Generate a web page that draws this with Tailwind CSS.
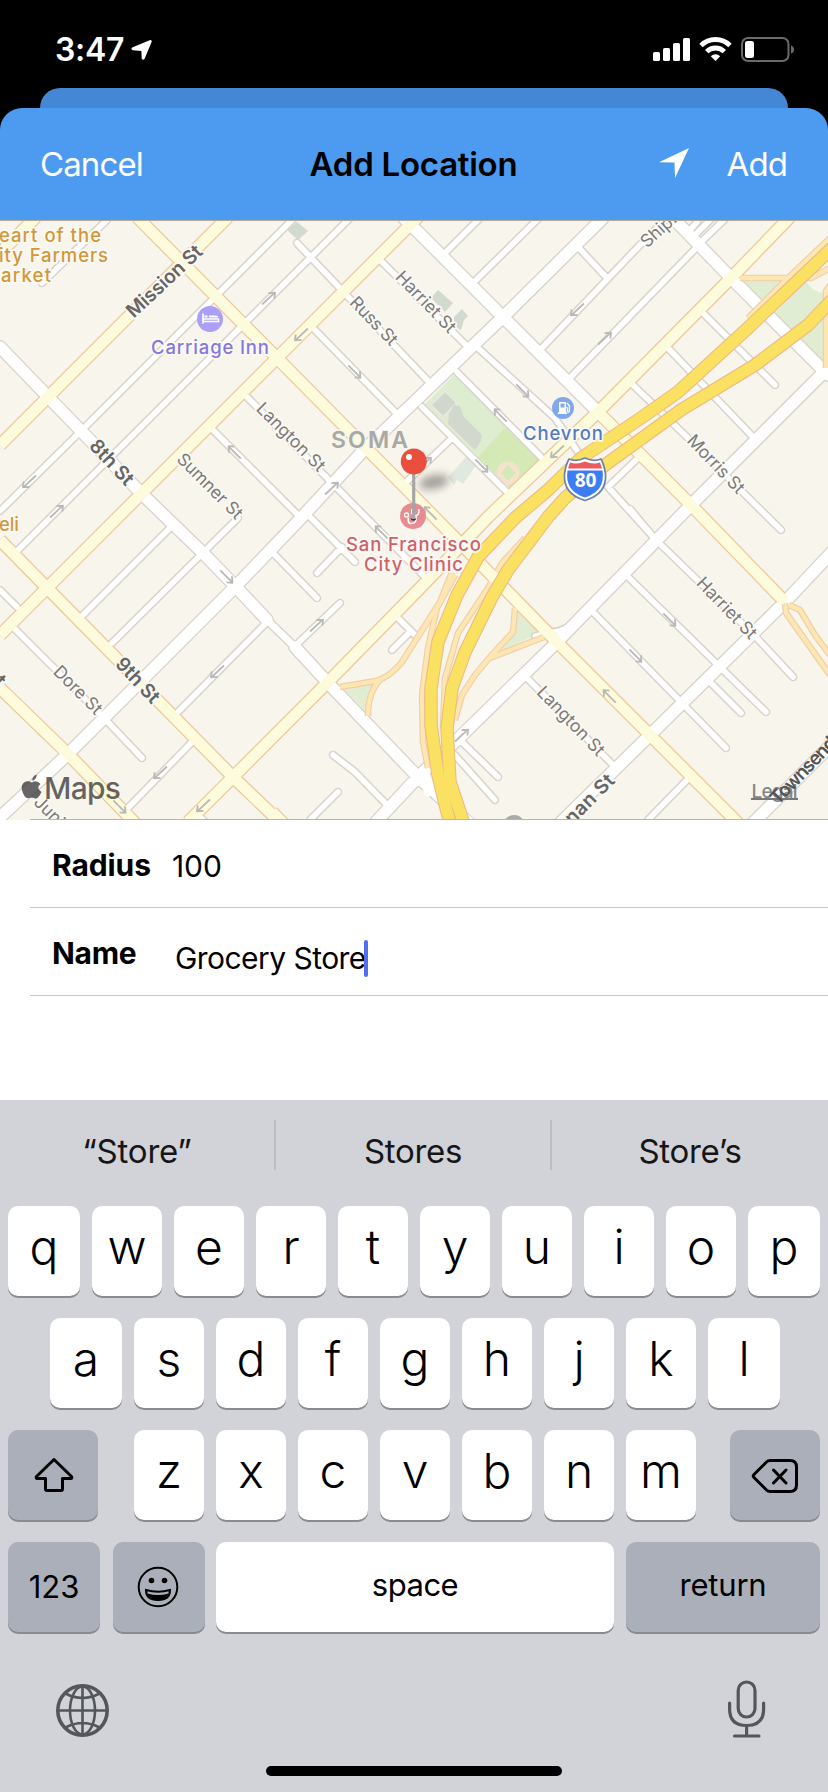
<!DOCTYPE html>
<html lang="en">
<head>
  <meta charset="UTF-8" />
  <meta name="viewport" content="width=device-width, initial-scale=1.0"/>
  <title>Add Location</title>
  <script src="https://cdn.jsdelivr.net/npm/@tailwindcss/browser@4"></script>
</head>
<body class="w-[828px] h-[1792px] overflow-hidden bg-black font-['Inter','Liberation_Sans',sans-serif] text-black">
<div class="flex flex-col w-[828px] h-[1792px]">

  <!-- status bar -->
  <header class="flex items-start justify-between h-[88px] pl-[55px] pr-[33px] text-white">
    <div class="flex items-start pt-[30px]">
      <span class="w-[76px] text-[32px] leading-[40px] font-semibold tracking-[-0.3px]">3:47</span>
      <svg class="mt-[10px] w-[21px] h-[20px]" viewBox="0 0 21 20"><path d="M1.200 7.500 18.600.200Q21-.4 20.600 2L13.600 18.800Q12.300 20.800 10.700 18.800L10.400 11 1.700 10.300Q-.7 9 1.200 7.500Z" fill="#fff"/></svg>
    </div>
    <div class="flex items-start gap-[9px] pt-[37px]">
      <svg class="w-[37px] h-[25px]" viewBox="0 0 37 25" fill="#fff"><rect x="0" y="15" width="7" height="9" rx="1.600"/><rect x="10" y="11" width="7" height="13" rx="1.600"/><rect x="20" y="6" width="7" height="18" rx="1.600"/><rect x="30" y="1" width="7" height="23" rx="1.600"/></svg>
      <svg class="w-[33px] h-[25px]" viewBox="0 0 33 25" fill="none" stroke="#fff" stroke-width="4.800"><path d="M2 8.500a20.500 20.500 0 0 1 29 0"/><path d="M7.700 14.600a12.500 12.500 0 0 1 17.600 0"/><path d="M16.500 24 11.800 19.200a6.700 6.700 0 0 1 9.400 0Z" fill="#fff" stroke="none"/></svg>
      <svg class="w-[54px] h-[25px]" viewBox="0 0 54 25"><rect x="1" y="1" width="46.500" height="23" rx="6" fill="none" stroke="#6b6b6b" stroke-width="2"/><rect x="4" y="4" width="9" height="17" rx="2.500" fill="#fff"/><path d="M50 8.500v8q3-1 3-4t-3-4Z" fill="#6b6b6b"/></svg>
    </div>
  </header>

  <!-- presenting sheet behind -->
  <div class="mx-[40px] h-[20px] shrink-0 bg-[#4487d5] rounded-t-[20px]"></div>

  <!-- nav bar -->
  <nav class="grid grid-cols-[1fr_auto_1fr] items-center h-[112px] shrink-0 pl-[40px] pr-[41px] pb-[1px] bg-[#4d9af1] rounded-t-[22px] text-[33px] leading-[40px]">
    <button class="justify-self-start text-white tracking-[-0.9px]">Cancel</button>
    <h1 class="font-semibold tracking-[-0.25px]">Add Location</h1>
    <div class="flex items-center justify-self-end text-white">
      <svg class="w-[30px] h-[30px] mr-[38px] -mt-[2px]" viewBox="0 0 30 30"><path d="M30 0 0 14.300 15.500 14.500 16 30Z" fill="#fff"/></svg>
      <button class="tracking-[-0.9px]">Add</button>
    </div>
  </nav>

  <!-- map -->
  <section class="h-[600px] shrink-0">
    <svg class="block w-[828px] h-[600px] bg-[#f8f5ec]" viewBox="0 220 828 600" fill="none" stroke-linejoin="round">
      <defs>
        <path id="alley" d="M107 220 42 283M295 217 82 430 0 511M351 217 240 328 18 550M247 397 425 577M213 430 300 517M311 518 355 562M342 547 317 573M0 590 17 607M15 629 105 719 142 758M170 528 83 615M238 518 112 643M267 622 178 712M192 742 126 810M198 815 206 823M273 553 317 598M295 646 340 603M398 618 415 635M410 632 392 650M333 755 355 772 389 807M338 792 310 820M462 742 498 777M453 753 495 800M527 678 615 767M630 509 656 540 755 636 793 677M626 575 766 712M591 610 726 748M708 680 741 713M686 781 648 820M578 247 606 277M540 350 638 247 668 217M568 380 698 246M697 222 690 230M693 237 713 217M700 243 727 217M703 313 775 385M668 348 753 437M633 385 688 438 781 530M636 460 608 487 656 540M478 348 555 418 582 458M457 372 542 458M422 407 508 493M452 438 402 486M315 330 398 415M297 243 430 383M382 262 470 349M445 253 480 218M473 283 539 218"/>
        <path id="street" d="M0 347 143 495 203 553 235 586 267 620M295 647 328 683 418 777 472 826M603 218 503 317 363 451 302 517 235 587 67 755 -3 820M404 218 503 317 598 412M376 822 418 777 460 737 552 647 691 505 828 368M832 552 785 602 648 737 555 828M752 824 832 744M673 218 731 278 828 375"/>
        <path id="avenue" d="M0 445 228 217M0 253 36 217M137 217 277 358 462 545 552 637 740 825M0 635 48 587 115 520 278 357 420 215M790 217 731 278 598 412 488 517 425 583 328 682 233 777 188 822M0 540 233 777 280 822M0 688 67 753 136 824M598 412 691 505 785 602M272 812 285 825"/>
        <path id="ramp" d="M452 572 440 602 402 662Q390 677 376 681L340 687M380 680Q368 692 368 716M455 575 437 608 428 648 422 695 423 742 428 768M525 538 502 563 488 588 458 633 445 678 443 728M515 608 513 632 490 657 475 675 462 695 455 720M490 658 544 637M740 278H811L830 268M830 238 788 278 748 318M826 368V291L831 284M785 603 786 613 830 675M789 605 800 610 815 635 830 655"/>
        <path id="freeway" d="M832 248 788 290 748 328 678 392 641 418 581 458 548 490 515 518 478 557 457 595 438 642 431 688V725L438 775 450 824M832 300 808 325 755 365 681 410 605 465 565 498 548 517 508 570 492 597 465 652 452 688 447 728 450 782 464 824"/>
        <path id="arrow" d="M-9.500 0H7.500M3-4 8 .300 3.500 4"/>
      </defs>

      <!-- parks and buildings -->
      <path fill="#deecd0" d="M455 374 542 462 512 490 425 404Z"/>
      <path fill="#d4e9b5" d="M505 428 542 462 512 490 478 457Z"/>
      <path fill="#d2d7cd" stroke="#e4e8de" stroke-width="2" d="M445 391 457 403 443 417 431 405Z"/>
      <path fill="#d2d8cd" d="M454 405 460 406 464 417 482 435 481 441 475 450 448 424 449 414Z"/>
      <circle cx="508" cy="473" r="11.500" fill="#f5e2cd"/>
      <path fill="#d4e9b5" d="M508 465 516 473 508 481 501 473Z"/>
      <path fill="#d2dad0" d="M438 290 453 303 445 312 431 298ZM462 309 468 316 464 320 461 330 454 326 454 317ZM297 222 308 231 298 240 287 230Z"/>
      <path fill="#e1e8e0" d="M467 456 478 463 463 484 457 480 454 485 448 477Z"/>
      <path fill="#e1edd2" d="M743 280H783L761 303ZM773 315 806 280Q811 292 824 293V364ZM517 611 540 633 500 652 514 633ZM343 688 376 683Q366 695 366 712Z"/>

      <!-- casings -->
      <g stroke="#d8d3cb" stroke-linecap="round">
        <use href="#alley" stroke-width="8.600"/>
        <use href="#street" stroke-width="14"/>
        <path d="M267 620 297 649" stroke-width="9.500"/>
        <path d="M535 636 552 632Q564 631 574 622" stroke-width="8"/>
      </g>
      <use href="#avenue" stroke="#f1c79b" stroke-width="13.500"/>
      <!-- fills -->
      <g stroke="#fff" stroke-linecap="round">
        <use href="#alley" stroke-width="5.600"/>
        <use href="#street" stroke-width="11.400"/>
        <path d="M267 620 297 649" stroke-width="7"/>
        <path d="M535 636 552 632Q564 631 574 622" stroke-width="5"/>
        <path d="M422 775 440 795 470 822M425 772 428 792" stroke-width="9"/>
      </g>
      <use href="#ramp" stroke="#f2cda6" stroke-width="6.500"/>
      <use href="#ramp" stroke="#fce6b2" stroke-width="4.300"/>
      <use href="#avenue" stroke="#fcfbdb" stroke-width="11"/>
      <use href="#freeway" stroke="#ecb988" stroke-width="13.500"/>
      <use href="#freeway" stroke="#fae161" stroke-width="11.400"/>

      <!-- one way arrows -->
      <g stroke="#b9b9b7" stroke-width="1.800">
        <use href="#arrow" transform="translate(269 298) rotate(-43)"/>
        <use href="#arrow" transform="translate(57 511) rotate(-43)"/>
        <use href="#arrow" transform="translate(332 488) rotate(-43)"/>
        <use href="#arrow" transform="translate(605 338) rotate(-43)"/>
        <use href="#arrow" transform="translate(317 625) rotate(-43)"/>
        <use href="#arrow" transform="translate(462 735) rotate(-43)"/>
        <use href="#arrow" transform="translate(425 463) rotate(-43)"/>
        <use href="#arrow" transform="translate(29 482) rotate(137)"/>
        <use href="#arrow" transform="translate(301 335) rotate(137)"/>
        <use href="#arrow" transform="translate(577 310) rotate(137)"/>
        <use href="#arrow" transform="translate(217 672) rotate(137)"/>
        <use href="#arrow" transform="translate(160 773) rotate(137)"/>
        <use href="#arrow" transform="translate(203 806) rotate(137)"/>
        <use href="#arrow" transform="translate(557 452) rotate(137)"/>
        <use href="#arrow" transform="translate(355 372) rotate(45)"/>
        <use href="#arrow" transform="translate(523 391) rotate(45)"/>
        <use href="#arrow" transform="translate(482 466) rotate(45)"/>
        <use href="#arrow" transform="translate(227 577) rotate(45)"/>
        <use href="#arrow" transform="translate(120 807) rotate(45)"/>
        <use href="#arrow" transform="translate(670 620) rotate(45)"/>
        <use href="#arrow" transform="translate(636 656) rotate(45)"/>
        <use href="#arrow" transform="translate(234 452) rotate(-135)"/>
        <use href="#arrow" transform="translate(500 415) rotate(-135)"/>
        <use href="#arrow" transform="translate(381 532) rotate(-135)"/>
        <use href="#arrow" transform="translate(609 696) rotate(-135)"/>
        <use href="#arrow" transform="translate(430 513) rotate(-135)"/>
      </g>

      <!-- street names -->
      <g font-size="17.500" fill="#7b7b7b" stroke="#fbf9f4" stroke-width="3.500" paint-order="stroke" text-anchor="middle">
        <text transform="translate(210 486) rotate(45)" y="6" textLength="85">Sumner St</text>
        <text transform="translate(291 437) rotate(45)" y="6" textLength="89">Langton St</text>
        <text transform="translate(374 321) rotate(46)" y="6" textLength="60">Russ St</text>
        <text transform="translate(426 302) rotate(46)" y="6" textLength="78">Harriet St</text>
        <text transform="translate(716 464) rotate(46)" y="6" textLength="74">Morris St</text>
        <text transform="translate(727 608) rotate(46)" y="6" textLength="78">Harriet St</text>
        <text transform="translate(571 721) rotate(46)" y="6" textLength="89">Langton St</text>
        <text transform="translate(78 690) rotate(45)" y="6" textLength="61">Dore St</text>
        <text transform="translate(643 244) rotate(-42)" y="6" text-anchor="start">Ship.</text>
        <text transform="translate(37 799) rotate(45)" y="6" text-anchor="start">Junip</text>
      </g>
      <g font-size="19.500" font-weight="600" fill="#666" stroke="#fbf9f4" stroke-width="3.500" paint-order="stroke" text-anchor="middle">
        <text transform="translate(164 281) rotate(-43)" y="7" textLength="96">Mission St</text>
        <text transform="translate(112 462) rotate(47)" y="7" textLength="55">8th St</text>
        <text transform="translate(138 680) rotate(47)" y="7" textLength="55">9th St</text>
        <text transform="translate(3 683) rotate(46)" y="7" text-anchor="end">t</text>
        <text transform="translate(611 777) rotate(-45)" y="7" text-anchor="end" textLength="74">nnan St</text>
      </g>

      <!-- places -->
      <g font-size="18.500" font-weight="500" stroke="#fbf9f4" stroke-width="3.500" paint-order="stroke">
        <g fill="#d2973a">
          <text x="-1" y="242" textLength="102">eart of the</text>
          <text x="-1" y="262" textLength="109">ity Farmers</text>
          <text x="1" y="282" textLength="50">arket</text>
          <text x="-1" y="531" textLength="20">eli</text>
        </g>
        <text x="151" y="353.500" fill="#8478e0" textLength="118">Carriage Inn</text>
        <text x="523" y="439.500" fill="#557abf" textLength="80">Chevron</text>
        <text x="346" y="551" fill="#cf6268" textLength="135">San Francisco</text>
        <text x="364" y="571" fill="#cf6268" textLength="99">City Clinic</text>
      </g>
      <text x="331" y="448" font-size="23" font-weight="600" fill="#a8a8a5" stroke="#f8f5ec" stroke-width="3" paint-order="stroke" textLength="77">SOMA</text>

      <circle cx="210" cy="319" r="13" fill="#aaa0f7"/>
      <path d="M203 313.500V323.500M218.500 322.500V319H203M203 321.500H218.500" stroke="#fff" stroke-width="1.700"/>
      <path d="M204.500 315.500h3v2h-3ZM209 315.500h7q2 0 2.500 2H209Z" fill="#fff"/>

      <circle cx="563" cy="408" r="11" fill="#82a8ec"/>
      <path fill="#fff" fill-rule="evenodd" d="M559 402h7v10.500h1.200v1.500h-9.400v-1.500H559ZM560.500 403.500v4h4v-4Z"/>
      <path d="M566 407.500h1.300v4q1.200 1.500 2-.2V405.500l-2.500-2.500" stroke="#fff" stroke-width="1.200"/>

      <!-- interstate shield -->
      <path d="M569 459Q576 462 585 458 594 462 601 459 604 464 605.500 474 607 494 585 500.500 563 494 564.500 474 566 464 569 459Z" fill="#fff" stroke="#6c81ac" stroke-width="1.700"/>
      <path d="M570 462.500Q577 465 585 461.500 593 465 600 462.500L602 468.500H568Z" fill="#ea5a5e"/>
      <path d="M567.500 470.500H602.500Q605.500 491 585 497.500 564.500 491 567.500 470.500Z" fill="#3c7df5"/>
      <text x="585.500" y="486.500" font-family="Open Sans" font-size="19" font-weight="700" fill="#fff" text-anchor="middle">80</text>

      <!-- clinic marker and pin -->
      <circle cx="413" cy="516" r="13" fill="#e78c91"/>
      <path d="M412 509q-1.500 6 3 6.500t4-6.500M416 516q1 7-4 7.500t-3.500-6" stroke="#fff" stroke-width="1.600"/>
      <circle cx="406.500" cy="515" r="2" stroke="#fff" stroke-width="1.300"/>
      <ellipse cx="434" cy="482" rx="15" ry="7" transform="rotate(-12 434 482)" fill="#000" class="opacity-35 blur-[4px]"/>
      <path d="M410.500 518.500h6l-1.500 2h-3Z" fill="#333"/>
      <path d="M413.700 472V519" stroke="#a5a5a5" stroke-width="3.200"/>
      <circle cx="413.800" cy="461.500" r="13" fill="#ea4e3e"/>
      <circle cx="409" cy="457" r="3" fill="#fff"/>

      <!-- attribution -->
      <path fill="#333" class="opacity-75" d="M36.500 774.500Q37 778.500 32.500 781 31.500 777 36.500 774.500ZM32 782.500Q36.500 779.500 40.500 784 35.500 787.500 41.500 792 37.500 800.500 34 798 31.500 796.800 29 798 25.500 799.500 22.500 792 20 784.500 25 781.700 28 780.500 32 782.500Z"/>
      <text x="44" y="799" font-size="30" font-weight="500" fill="#333" fill-opacity=".75" textLength="77">Maps</text>
      <text x="751.500" y="798" font-size="19" font-weight="500" fill="#777" fill-opacity=".9" textLength="46">Legal</text>
      <path d="M751 799H798" stroke="#777" stroke-width="2"/>
      <text transform="translate(773 801) rotate(-46)" y="7" font-size="19" font-weight="600" fill="#555" textLength="86">Townsend</text>
      <circle cx="514" cy="826" r="11" fill="#aaa"/>
      <path d="M30 819.500H828" stroke="#b5b5b5"/>
      <path d="M0 220.500H828" stroke="#b5a99c"/>
    </svg>
  </section>

  <!-- form -->
  <main class="h-[280px] shrink-0 bg-white pl-[30px] text-[30px] leading-[36px]">
    <div class="flex items-start h-[88px] pl-[22px] pt-[27px] border-b border-[#c8c8ca]">
      <label class="w-[120px] font-bold tracking-[-0.1px]">Radius</label>
      <span class="pt-[1px] tracking-[-0.1px]">100</span>
    </div>
    <div class="flex items-start h-[88px] pl-[22px] pt-[27px] border-b border-[#c8c8ca]">
      <label class="w-[123px] font-bold tracking-[-0.3px]">Name</label>
      <span class="pt-[5px] w-[189px] whitespace-nowrap tracking-[-0.55px]">Grocery Store</span>
      <span class="mt-[5px] w-[4px] h-[37px] rounded-sm bg-[#4f6fee]"></span>
    </div>
  </main>

  <!-- keyboard -->
  <footer class="flex flex-col flex-1 bg-[#d2d3d9]">
    <div class="grid grid-cols-3 h-[106px] pt-[20px] text-[33px] leading-[40px] text-center text-[#161616]">
      <div class="h-[50px] pt-[11px] tracking-[-0.2px] border-r-2 border-[#bcbdc2]">“Store”</div>
      <div class="h-[50px] pt-[11px] tracking-[-0.3px] border-r-2 border-[#bcbdc2]">Stores</div>
      <div class="h-[50px] pt-[11px] tracking-[-0.3px]">Store’s</div>
    </div>
    <div class="flex flex-col gap-[22px] px-[8px]">
      <div id="row1" class="flex gap-[12px]"></div>
      <div id="row2" class="flex gap-[12px] pl-[42px] pr-[40px]"></div>
      <div class="flex justify-between">
        <div class="flex items-center justify-center w-[90px] h-[90px] rounded-[10px] bg-[#abafba] shadow-[0_2px_0_#898a8f]">
          <svg class="w-[42px] h-[38px] ml-[2px]" viewBox="0 0 42 38" fill="none" stroke="#000" stroke-width="3" stroke-linejoin="round"><path d="M21 3.500 3.500 20.500Q2.500 22.500 4.500 22.500H12.500V33Q12.500 34.500 14 34.500H28Q29.500 34.500 29.500 33V22.500H37.500Q39.500 22.500 38.500 20.500Z"/></svg>
        </div>
        <div id="row3" class="flex gap-[12px] pl-[2px]"></div>
        <div class="flex items-center justify-center w-[90px] h-[90px] rounded-[10px] bg-[#abafba] shadow-[0_2px_0_#898a8f]">
          <svg class="w-[48px] h-[38px] mt-[2px]" viewBox="0 0 48 38" fill="none" stroke="#000" stroke-width="3" stroke-linejoin="round" stroke-linecap="round"><path d="M19 3.500H39Q45.500 3.500 45.500 10V28Q45.500 34.500 39 34.500H19Q17 34.500 15.500 33L3 20.500Q1.500 19 3 17.500L15.500 5Q17 3.500 19 3.500ZM22.500 13 35 26M35 13 22.500 26"/></svg>
        </div>
      </div>
      <div class="flex h-[90px] text-[31px] text-center leading-[85px]">
        <div class="w-[92px] mr-[13px] rounded-[10px] bg-[#abafba] shadow-[0_2px_0_#898a8f] leading-[90px] tracking-[-0.1px]">123</div>
        <div class="flex items-center justify-center w-[92px] mr-[11px] rounded-[10px] bg-[#abafba] shadow-[0_2px_0_#898a8f]">
          <svg class="w-[42px] h-[42px] mr-[3px]" viewBox="0 0 42 42" fill="none" stroke="#000" stroke-width="2"><circle cx="21" cy="21" r="19.300"/><circle cx="14.500" cy="14.500" r="2.800" fill="#000" stroke="none"/><circle cx="27.500" cy="14.500" r="2.800" fill="#000" stroke="none"/><path d="M9 24Q21 27.500 33 24 33 34 21 34 9 34 9 24Z"/><path d="M10.500 27.500Q21 30.500 31.500 27.500 29 34.500 21 34.500 13 34.500 10.500 27.500Z" fill="#000" stroke="none"/></svg>
        </div>
        <div class="w-[398px] mr-[12px] rounded-[10px] bg-white shadow-[0_2px_0_#898a8f] tracking-[-0.5px]">space</div>
        <div class="w-[194px] rounded-[10px] bg-[#abafba] shadow-[0_2px_0_#898a8f] tracking-[-0.2px]">return</div>
      </div>
    </div>
    <div class="flex items-start justify-between pt-[46px] pl-[55px] pr-[62px]">
      <svg class="w-[55px] h-[55px] mt-[5px]" viewBox="0 0 55 55" fill="none" stroke="#53575b" stroke-width="2.600"><circle cx="27.500" cy="27.500" r="24.700" stroke-width="3.600"/><ellipse cx="27.500" cy="27.500" rx="12.500" ry="24"/><path d="M27.500 3V52M3 27.500H52M10.500 10.500Q27.500 19.500 44.500 10.500M10.500 44.500Q27.500 35.500 44.500 44.500"/></svg>
      <svg class="w-[39px] h-[60px] mt-[1px]" viewBox="0 0 39 60" fill="none" stroke="#53575b" stroke-width="3.200" stroke-linecap="round"><rect x="11.200" y="3" width="16.800" height="35" rx="8.400"/><path d="M2.600 24V30Q2.600 46.500 19.600 46.500 36.600 46.500 36.600 30V24M19.600 46.500V56.500M7.500 57H32"/></svg>
    </div>
    <div class="mt-auto mb-[16px] mx-auto w-[296px] h-[10px] rounded-full bg-black"></div>
  </footer>
</div>

<script>
  // wide keys sit at both ends of the first two rows
  const wide = "w-[72px] h-[90px] rounded-[10px] bg-white shadow-[0_2px_0_#898a8f] text-center text-[48px] leading-[81px] font-[350]";
  const normal = "w-[70px] h-[90px] rounded-[10px] bg-white shadow-[0_2px_0_#898a8f] text-center text-[48px] leading-[81px] font-[350]";

  function addRow(id, letters, wideEnds) {
    const row = document.getElementById(id);
    letters.split("").forEach((letter, i) => {
      const key = document.createElement("div");
      key.className = wideEnds && (i === 0 || i === letters.length - 1) ? wide : normal;
      key.textContent = letter;
      row.appendChild(key);
    });
  }

  addRow("row1", "qwertyuiop", true);
  addRow("row2", "asdfghjkl", true);
  addRow("row3", "zxcvbnm", false);
</script>
</body>
</html>
